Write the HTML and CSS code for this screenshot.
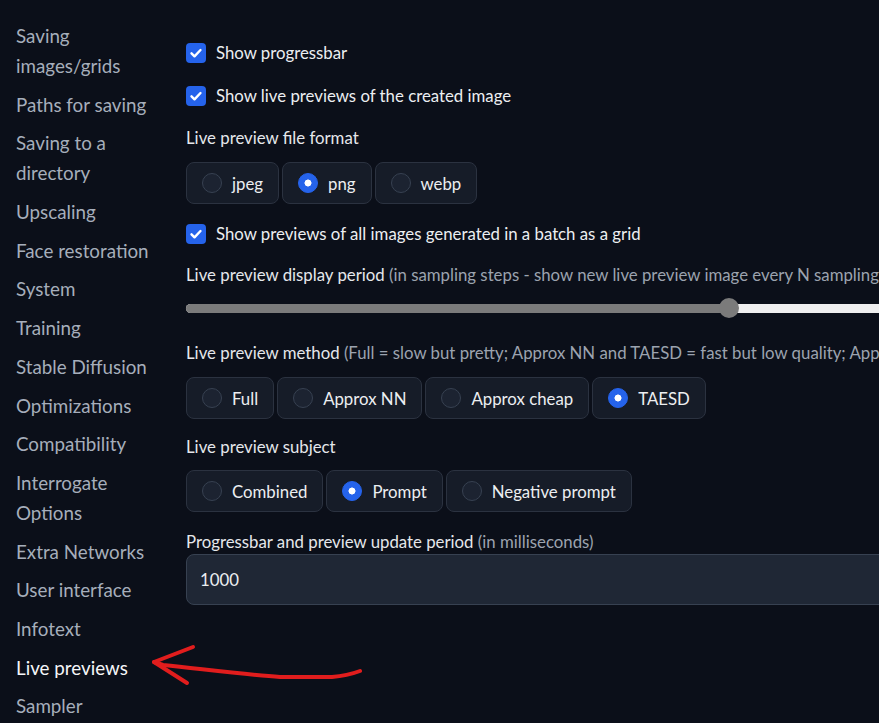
FILE: index.html
```html
<!DOCTYPE html>
<html>
<head>
<meta charset="utf-8">
<link rel="stylesheet" href="styles.css">
</head>
<body>
<div class="page">
  <nav class="sidebar">
    <div class="nav-item">Saving<br>images/grids</div>
    <div class="nav-item">Paths for saving</div>
    <div class="nav-item">Saving to a<br>directory</div>
    <div class="nav-item">Upscaling</div>
    <div class="nav-item">Face restoration</div>
    <div class="nav-item">System</div>
    <div class="nav-item">Training</div>
    <div class="nav-item">Stable Diffusion</div>
    <div class="nav-item">Optimizations</div>
    <div class="nav-item">Compatibility</div>
    <div class="nav-item">Interrogate<br>Options</div>
    <div class="nav-item">Extra Networks</div>
    <div class="nav-item">User interface</div>
    <div class="nav-item">Infotext</div>
    <div class="nav-item active">Live previews</div>
    <div class="nav-item">Sampler</div>
  </nav>

  <main class="content">
    <label class="check-row cb1">
      <span class="checkbox"><svg viewBox="0 0 20 20"><path d="M5.5 10.3l3 3 6-6.3" /></svg></span>
      <span>Show progressbar</span>
    </label>
    <label class="check-row cb2">
      <span class="checkbox"><svg viewBox="0 0 20 20"><path d="M5.5 10.3l3 3 6-6.3" /></svg></span>
      <span>Show live previews of the created image</span>
    </label>

    <div class="field-label l-format">Live preview file format</div>
    <div class="radio-group g-format">
      <div class="radio"><span class="dot"></span>jpeg</div>
      <div class="radio"><span class="dot on"></span>png</div>
      <div class="radio"><span class="dot"></span>webp</div>
    </div>

    <label class="check-row cb3">
      <span class="checkbox"><svg viewBox="0 0 20 20"><path d="M5.5 10.3l3 3 6-6.3" /></svg></span>
      <span>Show previews of all images generated in a batch as a grid</span>
    </label>

    <div class="field-label l-period">Live preview display period <span class="hint">(in sampling steps - show new live preview image every N sampling steps; -1 = only show after completion of batch)</span></div>
    <div class="slider">
      <div class="track"><div class="fill" style="width: 543px"></div></div>
      <div class="thumb" style="left: 533px"></div>
    </div>

    <div class="field-label l-method">Live preview method <span class="hint">(Full = slow but pretty; Approx NN and TAESD = fast but low quality; Approx cheap = super fast but terrible otherwise)</span></div>
    <div class="radio-group g-method">
      <div class="radio"><span class="dot"></span>Full</div>
      <div class="radio"><span class="dot"></span>Approx NN</div>
      <div class="radio"><span class="dot"></span>Approx cheap</div>
      <div class="radio"><span class="dot on"></span>TAESD</div>
    </div>

    <div class="field-label l-subject">Live preview subject</div>
    <div class="radio-group g-subject">
      <div class="radio"><span class="dot"></span>Combined</div>
      <div class="radio"><span class="dot on"></span>Prompt</div>
      <div class="radio"><span class="dot"></span>Negative prompt</div>
    </div>

    <div class="field-label l-update">Progressbar and preview update period <span class="hint">(in milliseconds)</span></div>
    <div class="textbox">1000</div>
  </main>
</div>

<svg class="arrow" width="879" height="723" viewBox="0 0 879 723">
  <path d="M360 671 C352 674 345 676 332 677 L280 677 C250 675 210 670 163 665 L154 662" />
  <path d="M193 647 L154 662 L187 683" />
</svg>
</body>
</html>
```

FILE: styles.css
```css
html, body {
  margin: 0;
  padding: 0;
  background: #0b0f19;
  overflow: hidden;
  width: 879px;
  height: 723px;
}

body {
  font-family: Lato, "Liberation Sans", sans-serif;
  font-size: 16.8px;
  color: #e5e7eb;
  position: relative;
}

.page {
  display: flex;
  width: 1200px;
}

.sidebar {
  width: 186px;
  flex: 0 0 186px;
  box-sizing: border-box;
  padding: 21px 0 0 16px;
  display: flex;
  flex-direction: column;
  gap: 8.7px;
}

.nav-item {
  line-height: 30px;
  font-size: 18.8px;
  color: #a6aebb;
  white-space: nowrap;
}

.nav-item.active {
  color: #f5f6f8;
}

.content {
  width: 1000px;
  padding-top: 41px;
  display: flex;
  flex-direction: column;
}

.check-row {
  display: flex;
  align-items: center;
  gap: 10px;
  height: 24px;
  line-height: 24px;
  white-space: nowrap;
  color: #eceef1;
}

.checkbox {
  width: 20px;
  height: 20px;
  border-radius: 4px;
  background: #2563eb;
  display: flex;
  flex: 0 0 20px;
}

.checkbox svg {
  width: 20px;
  height: 20px;
}

.checkbox path {
  fill: none;
  stroke: #ffffff;
  stroke-width: 2.4;
  stroke-linecap: round;
  stroke-linejoin: round;
}

.cb2 { margin-top: 19px; }
.cb3 { margin-top: 18px; }

.field-label {
  line-height: 24px;
  height: 24px;
  white-space: nowrap;
  color: #e5e7eb;
}

.hint {
  color: #9ca3af;
}

.l-format { margin-top: 18px; }
.l-period { margin-top: 17px; }
.l-method { margin-top: 23px; }
.l-subject { margin-top: 16px; }
.l-update { margin-top: 18px; }

.radio-group {
  display: flex;
  gap: 3px;
  margin-top: 12px;
}

.g-subject { margin-top: 11px; }

.radio {
  display: flex;
  align-items: center;
  gap: 10px;
  height: 42px;
  box-sizing: border-box;
  padding: 0 15px 0 15px;
  background: #161c28;
  border: 1px solid #2b3240;
  border-radius: 8px;
  color: #eceef1;
  white-space: nowrap;
}

.dot {
  width: 20px;
  height: 20px;
  box-sizing: border-box;
  border-radius: 50%;
  background: #1c2331;
  border: 1px solid #374151;
  flex: 0 0 20px;
}

.dot.on {
  background: #2563eb radial-gradient(circle, #ffffff 0 3.2px, transparent 3.8px);
  border-color: #2563eb;
}

.slider {
  position: relative;
  height: 20px;
  margin-top: 11px;
  display: flex;
  align-items: center;
}

.track {
  width: 100%;
  height: 9px;
  border-radius: 5px;
  background: #efefef;
  overflow: hidden;
}

.fill {
  height: 100%;
  background: #7b7b7b;
}

.thumb {
  position: absolute;
  top: 0;
  width: 20px;
  height: 20px;
  border-radius: 50%;
  background: #7b7b7b;
}

.textbox {
  height: 51px;
  box-sizing: border-box;
  padding: 0 13px;
  display: flex;
  align-items: center;
  background: #1f2735;
  border: 1px solid #374151;
  border-radius: 8px;
  color: #eceef1;
}

.arrow {
  position: absolute;
  left: 0;
  top: 0;
  pointer-events: none;
}

.arrow path {
  fill: none;
  stroke: #e11d1d;
  stroke-width: 4;
  stroke-linecap: round;
  stroke-linejoin: round;
}
```
